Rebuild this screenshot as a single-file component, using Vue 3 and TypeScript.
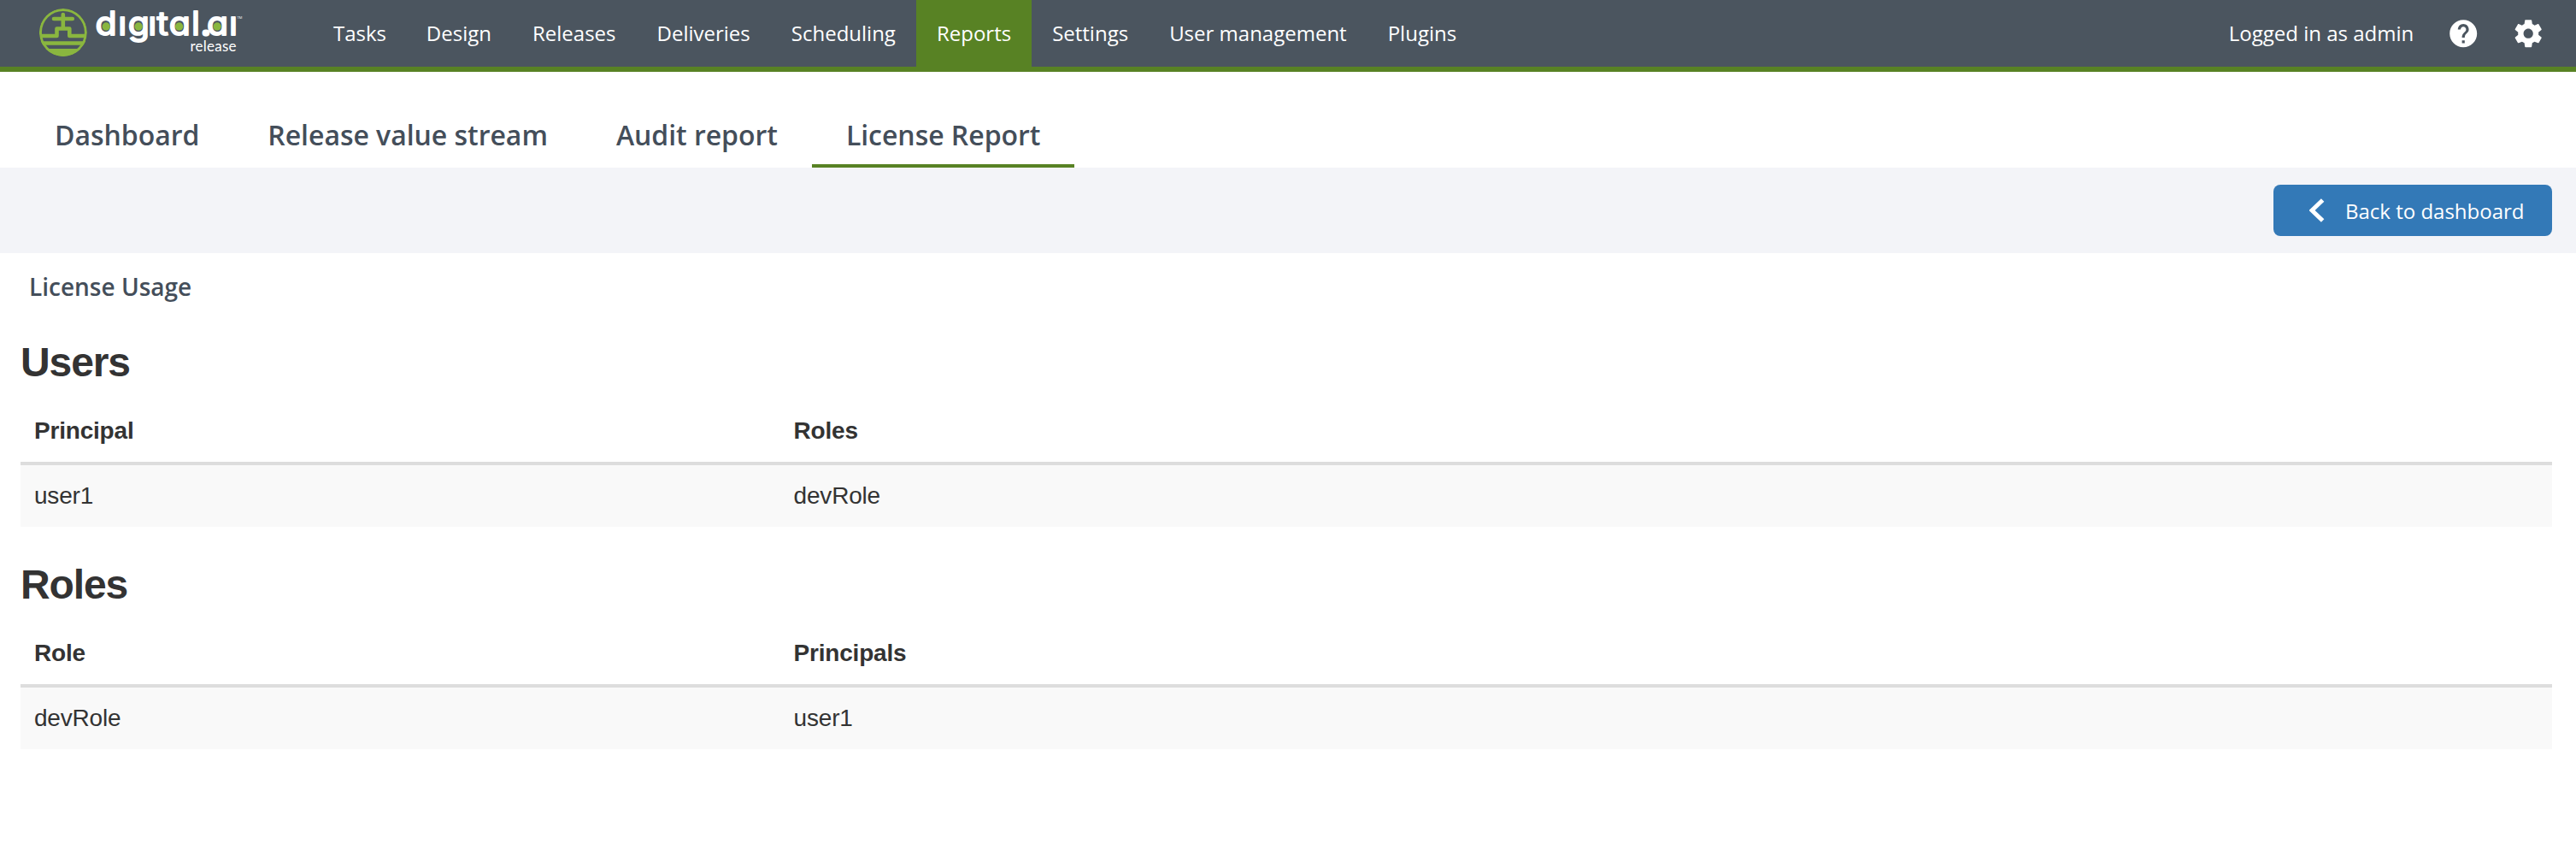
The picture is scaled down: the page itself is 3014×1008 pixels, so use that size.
<script setup lang="ts">
interface NavItem { label: string; active?: boolean }
interface Section { title: string; columns: [string, string]; rows: [string, string][] }

const nav: NavItem[] = [
  { label: 'Tasks' },
  { label: 'Design' },
  { label: 'Releases' },
  { label: 'Deliveries' },
  { label: 'Scheduling' },
  { label: 'Reports', active: true },
  { label: 'Settings' },
  { label: 'User management' },
  { label: 'Plugins' },
]

const tabs: NavItem[] = [
  { label: 'Dashboard' },
  { label: 'Release value stream' },
  { label: 'Audit report' },
  { label: 'License Report', active: true },
]

const sections: Section[] = [
  { title: 'Users', columns: ['Principal', 'Roles'], rows: [['user1', 'devRole']] },
  { title: 'Roles', columns: ['Role', 'Principals'], rows: [['devRole', 'user1']] },
]
</script>

<template>
  <div class="page">
    <header class="topbar">
      <svg class="logo" width="300" height="78" viewBox="0 0 300 78">
        <defs>
          <clipPath id="emblem"><circle cx="73.9" cy="38" r="28" /></clipPath>
          <clipPath id="wordmark">
            <path d="M100 0H139V18.500H149V0H174V18.500H182.500V0H268V18.500H300V78H100Z" />
          </clipPath>
        </defs>
        <g clip-path="url(#emblem)">
          <circle cx="73.9" cy="38" r="26.5" fill="none" stroke="#8ab63f" stroke-width="3" />
          <path d="M73.8 17v6M63 22H84.8" fill="none" stroke="#8ab63f" stroke-width="4.6" stroke-linecap="round" />
          <path d="M73.8 22V33M48 42H66.500V33.500H81.300V42H100" fill="none" stroke="#8ab63f" stroke-width="4.6" stroke-linejoin="round" />
          <path d="M44 48.300H104V52.700H44ZM44 57H104V70H44Z" fill="#8ab63f" />
        </g>
        <g clip-path="url(#wordmark)">
          <text class="wordmark" transform="scale(1.08 1)" y="41.200" x="103.200 128.100 138.600 160.500 169.900 183 207.500 217.700 224.200 248.200">digital<tspan class="point">.</tspan>ai</text>
        </g>
        <g fill="#8ab63f">
          <circle cx="124.2" cy="31" r="4.7" />
          <circle cx="162.1" cy="31" r="4.7" />
          <circle cx="209.6" cy="31" r="4.7" />
          <circle cx="254.1" cy="31" r="4.7" />
        </g>
        <text class="tm" x="277.5" y="22">TM</text>
        <text class="product" x="222.5" y="59.5" textLength="54">release</text>
      </svg>
      <nav class="nav">
        <a v-for="item in nav" :key="item.label" class="nav-item" :class="{ active: item.active }">{{ item.label }}</a>
      </nav>
      <div class="account">
        <span class="who">Logged in as admin</span>
        <svg class="help" width="38.4" height="38.4" viewBox="0 0 24 24" fill="#fff">
          <path d="M12 2C6.48 2 2 6.48 2 12s4.48 10 10 10 10-4.480 10-10S17.520 2 12 2zm1 17h-2v-2h2v2zm2.070-7.750l-.9.920C13.450 12.900 13 13.500 13 15h-2v-.5c0-1.100.45-2.100 1.170-2.830l1.240-1.260c.37-.36.59-.86.59-1.410 0-1.100-.9-2-2-2s-2 .9-2 2H8c0-2.210 1.790-4 4-4s4 1.790 4 4c0 .88-.36 1.680-.93 2.250z" />
        </svg>
        <svg class="gear" width="38.4" height="38.4" viewBox="0 0 24 24" fill="#fff">
          <path d="M19.430 12.980c.04-.32.07-.64.07-.98s-.03-.66-.07-.98l2.110-1.650c.19-.15.24-.42.12-.64l-2-3.460c-.12-.22-.39-.3-.61-.22l-2.490 1c-.52-.4-1.080-.73-1.690-.98l-.38-2.650C14.460 2.180 14.250 2 14 2h-4c-.25 0-.46.18-.49.42l-.38 2.650c-.61.25-1.170.59-1.690.98l-2.490-1c-.23-.09-.49 0-.61.22l-2 3.460c-.13.22-.07.49.12.64l2.110 1.650c-.04.32-.07.65-.07.98s.03.66.07.98l-2.110 1.650c-.19.15-.24.42-.12.64l2 3.460c.12.22.39.3.61.22l2.490-1c.52.4 1.080.73 1.690.98l.38 2.650c.03.24.24.42.49.42h4c.25 0 .46-.18.49-.42l.38-2.650c.61-.25 1.170-.59 1.690-.98l2.490 1c.23.09.49 0 .61-.22l2-3.460c.12-.22.07-.49-.12-.64l-2.110-1.650zM12 15.500c-1.930 0-3.500-1.570-3.500-3.500s1.570-3.500 3.500-3.500 3.500 1.570 3.500 3.500-1.570 3.500-3.500 3.500z" />
        </svg>
      </div>
    </header>

    <div class="tabs">
      <a v-for="tab in tabs" :key="tab.label" class="tab" :class="{ active: tab.active }">{{ tab.label }}</a>
    </div>

    <div class="actions">
      <button class="back">
        <svg width="18" height="28" viewBox="0 0 18 28"><path d="M15.600 2L3 14L15.600 26" fill="none" stroke="#fff" stroke-width="5" /></svg>
        <span>Back to dashboard</span>
      </button>
    </div>

    <main class="content">
      <div class="heading">License Usage</div>
      <section v-for="section in sections" :key="section.title">
        <h2>{{ section.title }}</h2>
        <table>
          <thead>
            <tr><th v-for="column in section.columns" :key="column">{{ column }}</th></tr>
          </thead>
          <tbody>
            <tr v-for="row in section.rows" :key="row[0]"><td v-for="cell in row" :key="cell">{{ cell }}</td></tr>
          </tbody>
        </table>
      </section>
    </main>
  </div>
</template>

<style>
body { background: #fff; }
</style>

<style scoped>
.page { min-height: 1008px; font-family: "Open Sans", sans-serif; box-sizing: border-box; }
.topbar { display: flex; height: 78px; background: #4b555f; border-bottom: 6px solid #588224; color: #fff; font-size: 24px; }
.logo { flex: none; display: block; }
.wordmark { font-family: Inter, sans-serif; font-size: 38px; font-weight: 400; font-feature-settings: "cv11"; fill: #fff; stroke: #fff; stroke-width: 1.8px; stroke-linejoin: round; }
.point { stroke-width: 3px; }
.tm { font-family: "Open Sans", sans-serif; font-size: 4px; fill: #fff; }
.product { font-family: Lato, sans-serif; font-size: 17px; fill: #fff; }
.nav { display: flex; margin-left: 66px; }
.nav-item { padding: 0 24px; line-height: 78px; white-space: nowrap; }
.nav-item:first-child { margin-right: -1.2px; }
.nav-item.active { background: #588224; }
.account { display: flex; align-items: center; margin-left: auto; padding-right: 37px; }
.who { line-height: 78px; }
.help { margin-left: 39px; }
.gear { margin-left: 37px; }
.tabs { display: flex; height: 112px; padding-left: 24px; align-items: flex-end; }
.tab { box-sizing: border-box; height: 76px; padding: 0 40px; line-height: 76px; font-size: 32px; font-weight: 600; letter-spacing: -0.04px; color: #444e5a; white-space: nowrap; border-bottom: 4px solid transparent; }
.tab.active { border-color: #588224; }
.actions { box-sizing: border-box; height: 100px; padding: 20px 28px; background: #f3f4f8; display: flex; justify-content: flex-end; }
.back { box-sizing: border-box; width: 326px; height: 60px; padding: 0 0 0 42px; border: 0; border-radius: 8px; background: #3379b7; color: #fff; font: 24px "Open Sans", sans-serif; display: flex; align-items: center; gap: 24px; white-space: nowrap; }
.content { padding: 0 28px 0 24px; font-family: "Liberation Sans", Arial, sans-serif; color: #333; }
.heading { height: 80px; padding-left: 10px; font: 600 28px/78px "Open Sans", sans-serif; color: #444e5a; }
section { height: 260px; }
h2 { margin: 0; height: 92px; font-size: 48px; line-height: 95px; font-weight: 700; letter-spacing: -1.1px; }
table { width: 100%; table-layout: fixed; border-collapse: separate; border-spacing: 0; font-size: 28px; letter-spacing: -0.2px; }
th, td { box-sizing: border-box; height: 72px; padding: 16px; line-height: 40px; text-align: left; }
th { border-bottom: 4px solid #ddd; }
th:first-child { width: 30%; }
td { background: #f9f9f9; }
</style>
